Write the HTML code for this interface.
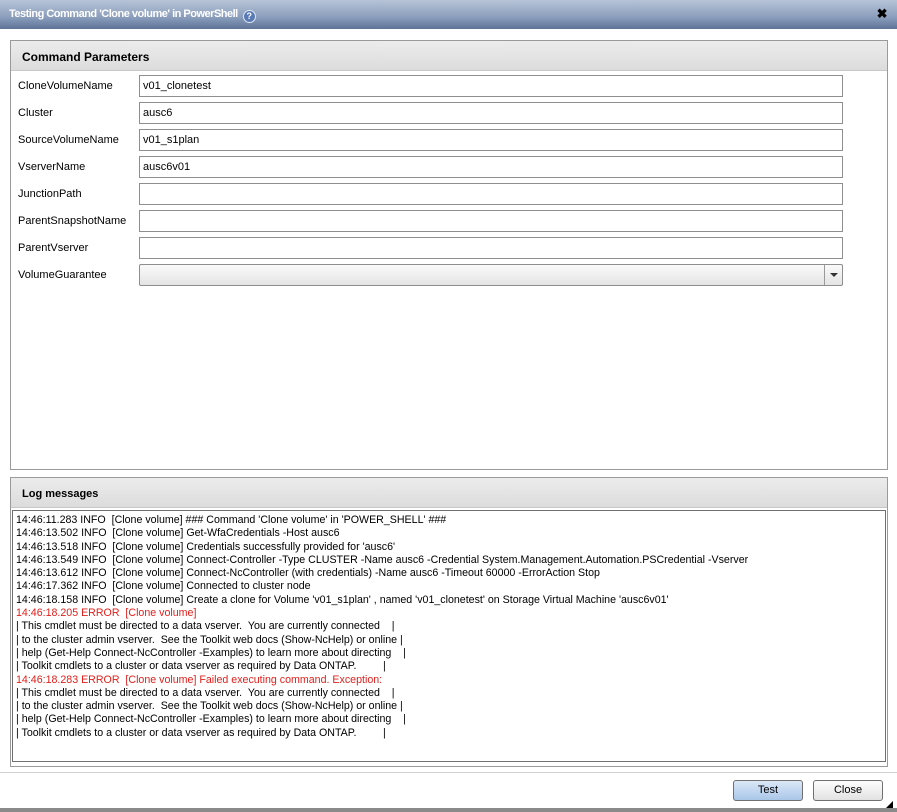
<!DOCTYPE html>
<html><head><style>
*{box-sizing:border-box;margin:0;padding:0}
body{width:897px;height:812px;background:#fff;font-family:"Liberation Sans",sans-serif;font-size:11px;color:#000;position:relative;overflow:hidden}
.title{position:absolute;left:0;top:0;width:897px;height:29px;background:linear-gradient(#b7c4d8,#8a9dbb 60%,#5e7398);color:#fff;font-weight:bold;font-size:11px;letter-spacing:-0.5px;padding:8px 0 0 9px}
.q{display:inline-block;width:13px;height:13px;border-radius:50%;background:#5a7ab6;border:1px solid #dfe7f3;color:#fff;font-size:9px;text-align:center;line-height:11px;margin-left:5px;vertical-align:-2px;letter-spacing:0}
.x{position:absolute;right:10px;top:6px;color:#000;font-size:13px;font-weight:bold}
.panel{position:absolute;border:1px solid #9a9a9a;background:#fff}
.hdr{height:30px;background:linear-gradient(#ececec,#dcdcdc);border-bottom:1px solid #c8c8c8;font-weight:bold;font-size:12px;padding:9px 0 0 11px}
.lbl{position:absolute;left:18px}
.inp{position:absolute;left:139px;width:704px;height:22px;border:1px solid #8e8e8e;padding:4px 0 0 3px;font-size:11px}
.log{position:absolute;left:12px;top:510px;width:874px;height:252px;border:1px solid #707070;padding:3px 0 0 3px;font-size:10.65px;line-height:13.3px;white-space:pre}
.r{color:#e0201c}
.btn{position:absolute;top:780px;width:70px;height:21px;border:1px solid #707070;border-radius:3px;text-align:center;line-height:19px;font-size:11px}
</style></head><body>
<div class="title">Testing Command 'Clone volume' in PowerShell<span class="q">?</span><span class="x">✖</span></div>
<div class="panel" style="left:10px;top:40px;width:878px;height:430px"><div class="hdr">Command Parameters</div></div>
<div class="lbl" style="top:80px">CloneVolumeName</div><div class="inp" style="top:75px">v01_clonetest</div>
<div class="lbl" style="top:107px">Cluster</div><div class="inp" style="top:102px">ausc6</div>
<div class="lbl" style="top:134px">SourceVolumeName</div><div class="inp" style="top:129px">v01_s1plan</div>
<div class="lbl" style="top:161px">VserverName</div><div class="inp" style="top:156px">ausc6v01</div>
<div class="lbl" style="top:188px">JunctionPath</div><div class="inp" style="top:183px"></div>
<div class="lbl" style="top:215px">ParentSnapshotName</div><div class="inp" style="top:210px"></div>
<div class="lbl" style="top:242px">ParentVserver</div><div class="inp" style="top:237px"></div>
<div class="lbl" style="top:269px">VolumeGuarantee</div>
<div class="inp" style="top:264px;background:linear-gradient(#fafafa,#e4e4e4);border-radius:2px"><div style="position:absolute;right:0;top:0;width:18px;height:20px;border-left:1px solid #9a9a9a"><div style="position:absolute;left:5px;top:8px;border-left:4px solid transparent;border-right:4px solid transparent;border-top:4px solid #333"></div></div></div>
<div class="panel" style="left:10px;top:477px;width:878px;height:290px"><div class="hdr" style="font-size:11px;padding-top:10px">Log messages</div></div>
<div class="log">14:46:11.283 INFO  [Clone volume] ### Command 'Clone volume' in 'POWER_SHELL' ###
14:46:13.502 INFO  [Clone volume] Get-WfaCredentials -Host ausc6
14:46:13.518 INFO  [Clone volume] Credentials successfully provided for 'ausc6'
14:46:13.549 INFO  [Clone volume] Connect-Controller -Type CLUSTER -Name ausc6 -Credential System.Management.Automation.PSCredential -Vserver
14:46:13.612 INFO  [Clone volume] Connect-NcController (with credentials) -Name ausc6 -Timeout 60000 -ErrorAction Stop
14:46:17.362 INFO  [Clone volume] Connected to cluster node
14:46:18.158 INFO  [Clone volume] Create a clone for Volume 'v01_s1plan' , named 'v01_clonetest' on Storage Virtual Machine 'ausc6v01'
<span class="r">14:46:18.205 ERROR  [Clone volume]</span>
| This cmdlet must be directed to a data vserver.  You are currently connected    |
| to the cluster admin vserver.  See the Toolkit web docs (Show-NcHelp) or online |
| help (Get-Help Connect-NcController -Examples) to learn more about directing    |
| Toolkit cmdlets to a cluster or data vserver as required by Data ONTAP.         |
<span class="r">14:46:18.283 ERROR  [Clone volume] Failed executing command. Exception:</span>
| This cmdlet must be directed to a data vserver.  You are currently connected    |
| to the cluster admin vserver.  See the Toolkit web docs (Show-NcHelp) or online |
| help (Get-Help Connect-NcController -Examples) to learn more about directing    |
| Toolkit cmdlets to a cluster or data vserver as required by Data ONTAP.         |</div>
<div style="position:absolute;left:0;top:772px;width:897px;height:1px;background:#d0d0d0"></div>
<div class="btn" style="left:733px;background:linear-gradient(#dbe8f7,#a9c6e8)">Test</div>
<div class="btn" style="left:813px;background:linear-gradient(#fdfdfd,#e2e2e2)">Close</div>
<div style="position:absolute;right:4px;bottom:4px;border-left:7px solid transparent;border-bottom:7px solid #000"></div>
<div style="position:absolute;left:0;top:808px;width:897px;height:4px;background:#8a8a8a"></div>
</body></html>
